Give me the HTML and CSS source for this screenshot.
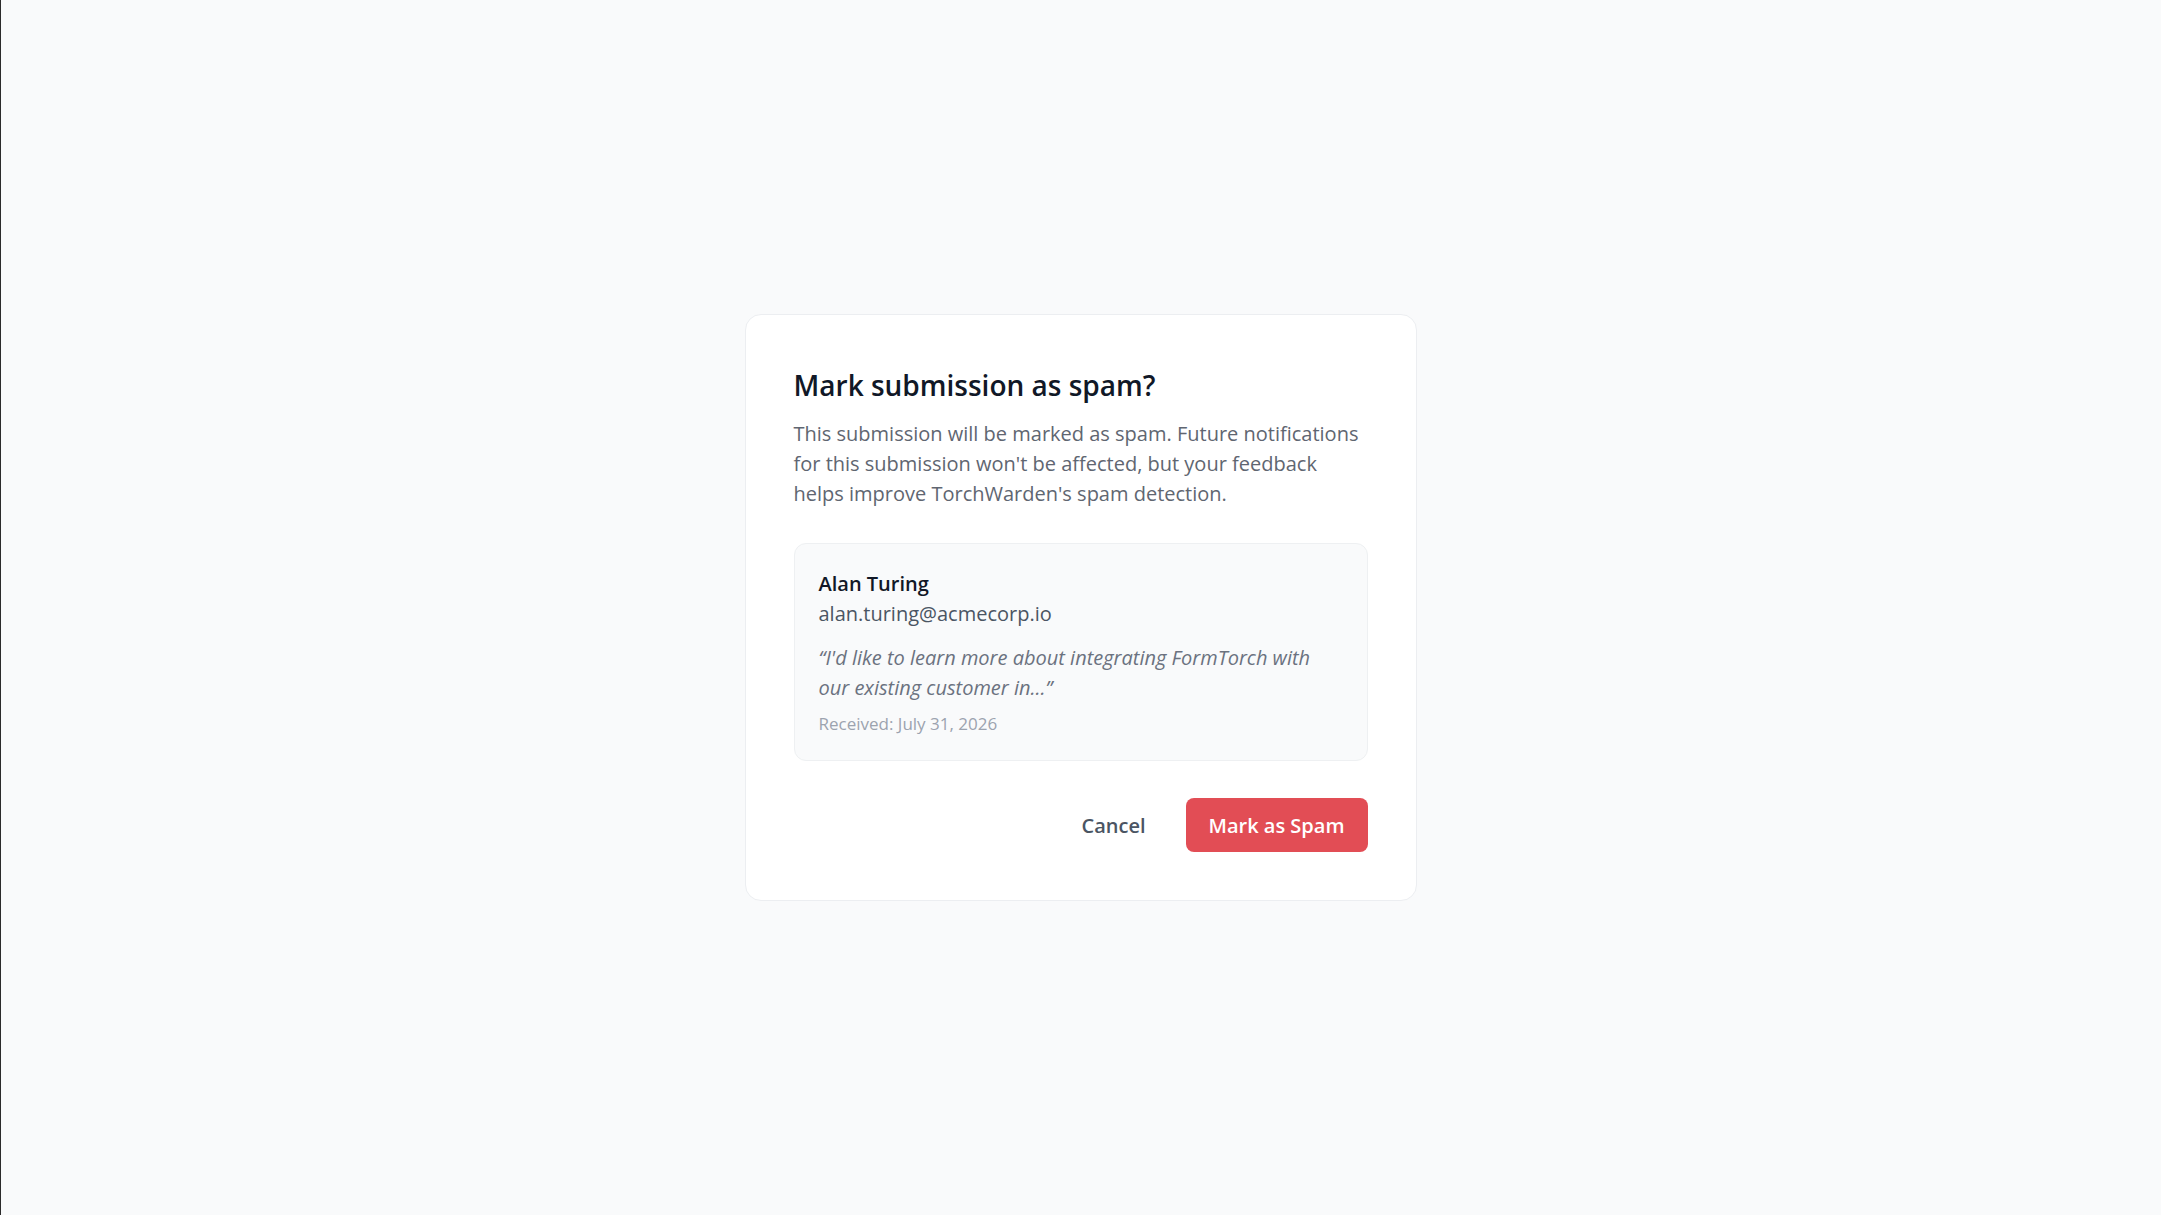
FILE: index.html
```html
<!DOCTYPE html>
<html lang="en">
<head>
<meta charset="utf-8">
<title>Mark submission as spam?</title>
<link rel="stylesheet" href="styles.css">
</head>
<body>
<main class="page">
  <section class="dialog" role="dialog" aria-labelledby="dlg-title">
    <h1 class="dialog-title" id="dlg-title">Mark submission as spam?</h1>
    <p class="dialog-desc">This submission will be marked as spam. Future notifications for this submission won't be affected, but your feedback helps improve TorchWarden's spam detection.</p>
    <div class="submission">
      <div class="sub-name">Alan Turing</div>
      <div class="sub-email">alan.turing@acmecorp.io</div>
      <p class="sub-quote">“I'd like to learn more about integrating FormTorch with our existing customer in...”</p>
      <div class="sub-date">Received: July 31, 2026</div>
    </div>
    <div class="actions">
      <button class="btn btn-cancel" type="button">Cancel</button>
      <button class="btn btn-danger" type="button">Mark as Spam</button>
    </div>
  </section>
</main>
</body>
</html>
```
FILE: styles.css
```css
* { box-sizing: border-box; }
html, body { margin: 0; padding: 0; height: 100%; }
body {
  background: linear-gradient(to right, #2b2b2b 1px, #f9fafb 1px);
  font-family: "Open Sans", "Noto Sans", sans-serif;
}
.page {
  min-height: 100%;
  display: flex;
  align-items: center;
  justify-content: center;
}
.dialog {
  width: 672px;
  background: #ffffff;
  border: 1px solid #eceef1;
  border-radius: 16px;
  padding: 48px;
}
.dialog-title {
  margin: 0;
  font-size: 28px;
  line-height: 42px;
  font-weight: 600;
  color: #111827;
  position: relative;
  top: 1px;
}
.dialog-desc {
  margin: 14px 0 0;
  font-size: 20px;
  line-height: 30px;
  color: #5f6671;
}
.submission {
  margin-top: 34px;
  background: #f9fafb;
  border: 1px solid #eef0f2;
  border-radius: 12px;
  padding: 25px 24px 24px;
}
.sub-name {
  font-size: 20px;
  line-height: 30px;
  font-weight: 600;
  color: #111827;
}
.sub-email {
  font-size: 20px;
  line-height: 30px;
  color: #4b5563;
}
.sub-quote {
  margin: 14px 0 0;
  font-size: 20px;
  line-height: 30px;
  font-style: italic;
  color: #6b7280;
}
.sub-date {
  margin-top: 9px;
  font-size: 17px;
  line-height: 24px;
  color: #9ca3af;
}
.actions {
  margin-top: 37px;
  display: flex;
  justify-content: flex-end;
  align-items: center;
  gap: 17px;
}
.btn {
  font-family: inherit;
  font-size: 20px;
  font-weight: 600;
  border: 0;
  border-radius: 8px;
  height: 54px;
  padding: 0 23px;
  cursor: pointer;
}
.btn-cancel {
  background: transparent;
  color: #4b5563;
}
.btn-danger {
  background: #e24d55;
  color: #ffffff;
}
```
